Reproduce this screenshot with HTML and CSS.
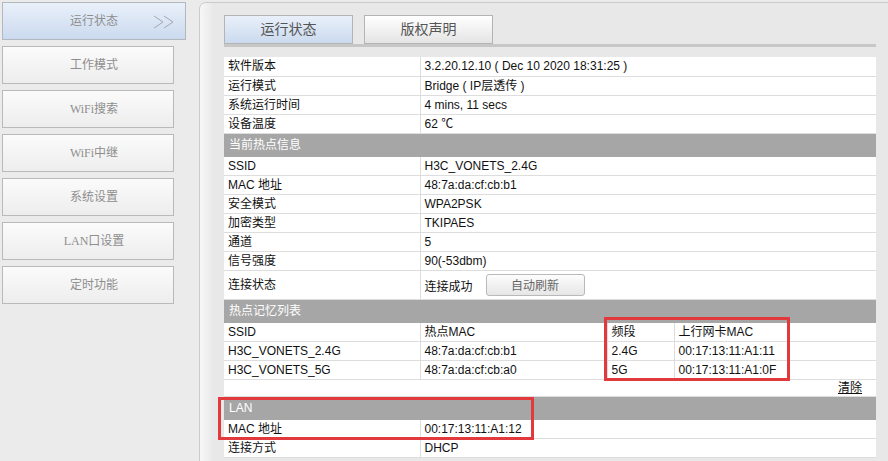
FILE: index.html
```html
<!DOCTYPE html>
<html lang="zh-CN">
<head>
  <meta charset="UTF-8">
  <meta name="viewport" content="width=device-width, initial-scale=1.0">
  <title>运行状态</title>
  <link rel="stylesheet" href="styles.css">
</head>
<body>

<div class="page">
  <div class="sidebar">
    <div class="menu-item active">运行状态
      <svg class="arrows" width="22" height="14" viewBox="0 0 22 14">
        <polyline points="1,1 10,7 1,13" fill="none" stroke="#a3a8b0" stroke-width="1"/>
        <polyline points="11,1 20,7 11,13" fill="none" stroke="#a3a8b0" stroke-width="1"/>
      </svg>
    </div>
    <div class="menu-item">工作模式</div>
    <div class="menu-item">WiFi搜索</div>
    <div class="menu-item">WiFi中继</div>
    <div class="menu-item">系统设置</div>
    <div class="menu-item">LAN口设置</div>
    <div class="menu-item">定时功能</div>
  </div>

  <div class="panel">
    <div class="tabs">
      <div class="tab active">运行状态</div>
      <div class="tab">版权声明</div>
    </div>
    <div class="tab-line"></div>

    <div class="table-wrap">
      <table class="info">
        <colgroup>
          <col style="width:196px">
          <col style="width:187px">
          <col style="width:67px">
          <col style="width:202px">
        </colgroup>
        <tr><td>软件版本</td><td colspan="3">3.2.20.12.10 ( Dec 10 2020 18:31:25 )</td></tr>
        <tr><td>运行模式</td><td colspan="3">Bridge ( IP层透传 )</td></tr>
        <tr><td>系统运行时间</td><td colspan="3">4 mins, 11 secs</td></tr>
        <tr><td>设备温度</td><td colspan="3">62 ℃</td></tr>

        <tr class="head"><td colspan="4">当前热点信息</td></tr>
        <tr><td>SSID</td><td colspan="3">H3C_VONETS_2.4G</td></tr>
        <tr><td>MAC 地址</td><td colspan="3">48:7a:da:cf:cb:b1</td></tr>
        <tr><td>安全模式</td><td colspan="3">WPA2PSK</td></tr>
        <tr><td>加密类型</td><td colspan="3">TKIPAES</td></tr>
        <tr><td>通道</td><td colspan="3">5</td></tr>
        <tr><td>信号强度</td><td colspan="3">90(-53dbm)</td></tr>
        <tr class="tall">
          <td>连接状态</td>
          <td colspan="3">连接成功<button class="refresh">自动刷新</button></td>
        </tr>

        <tr class="head"><td colspan="4">热点记忆列表</td></tr>
        <tr><td>SSID</td><td>热点MAC</td><td>频段</td><td>上行网卡MAC</td></tr>
        <tr><td>H3C_VONETS_2.4G</td><td>48:7a:da:cf:cb:b1</td><td>2.4G</td><td>00:17:13:11:A1:11</td></tr>
        <tr><td>H3C_VONETS_5G</td><td>48:7a:da:cf:cb:a0</td><td>5G</td><td>00:17:13:11:A1:0F</td></tr>
        <tr class="clear-row"><td colspan="4"><a href="#" class="clear">清除</a></td></tr>

        <tr class="head"><td colspan="4">LAN</td></tr>
        <tr><td>MAC 地址</td><td colspan="3">00:17:13:11:A1:12</td></tr>
        <tr><td>连接方式</td><td colspan="3">DHCP</td></tr>
      </table>

      <!-- marcas rojas de la captura -->
      <div class="mark mark-band"></div>
      <div class="mark mark-lan"></div>
    </div>
  </div>
</div>

</body>
</html>
```

FILE: styles.css
```css
* {
  box-sizing: border-box;
}
body {
  margin: 0;
  background-color: #ebebeb;
  font-family: "Liberation Sans", "Noto Sans CJK SC", sans-serif;
  font-size: 12px;
  color: #111;
  overflow: hidden;
  height: 461px;
}
.page {
  display: flex;
  align-items: flex-start;
}

/* menu lateral */
.sidebar {
  width: 199px;
  flex-shrink: 0;
  padding: 2px 0 0 2px;
  display: flex;
  flex-direction: column;
  gap: 6px;
}
.menu-item {
  position: relative;
  width: 172px;
  height: 38px;
  padding-left: 12px;
  line-height: 36px;
  text-align: center;
  font-family: "Liberation Serif", "Noto Sans CJK SC", serif;
  font-size: 12px;
  color: #8e8e8e;
  border: 1px solid #b9b9b9;
  background: linear-gradient(#fbfbfb, #ededed);
}
.menu-item.active {
  width: 184px;
  padding-left: 0;
  border-color: #b3b8bf;
  background: linear-gradient(#e9f0fa, #cbdaef);
}
.arrows {
  position: absolute;
  right: 10px;
  top: 12px;
}

/* panel principal */
.panel {
  width: 720px;
  flex-shrink: 0;
  margin-top: 2px;
  min-height: 470px;
  padding: 12px 0 0 24px;
  border: 1px solid #cbcbcb;
  border-top-left-radius: 7px;
  background: linear-gradient(to right, #f7f7f7 0, #e8e8e8 14px);
}
.tabs {
  display: flex;
  gap: 11px;
}
.tab {
  width: 129px;
  height: 29px;
  line-height: 27px;
  text-align: center;
  font-size: 14px;
  color: #555;
  border: 1px solid #b4b4b4;
  background: linear-gradient(#ffffff, #e4e4e4);
}
.tab.active {
  background: linear-gradient(#e9f0fa, #cbdaef);
}
.tab-line {
  width: 652px;
  height: 3px;
  background-color: #c7c7c7;
  margin-bottom: 10px;
}

.table-wrap {
  position: relative;
  width: 652px;
}
.info {
  width: 652px;
  table-layout: fixed;
  border-collapse: collapse;
  background-color: #fff;
}
.info td {
  height: 19px;
  padding: 0 4px;
  line-height: 18px;
  border-bottom: 1px solid #dddddd;
  border-left: 1px solid #dddddd;
  white-space: nowrap;
  vertical-align: middle;
}
.info td:first-child {
  border-left: none;
}
.info tr.head td {
  height: 23px;
  padding-left: 5px;
  background-color: #a6a6a6;
  color: #fff;
  border-bottom: 1px solid #a6a6a6;
}
.info tr.tall td {
  height: 29px;
}
.info tr.clear-row td {
  height: 17px;
  line-height: 16px;
  text-align: right;
  padding-right: 14px;
}
.clear {
  color: #111;
  text-decoration: underline;
}
.refresh {
  margin-left: 13px;
  width: 99px;
  height: 22px;
  font-family: "Liberation Sans", "Noto Sans CJK SC", sans-serif;
  font-size: 12px;
  color: #666;
  border: 1px solid #b9b9b9;
  border-radius: 3px;
  background: linear-gradient(#fdfdfd, #e6e6e6);
}

.mark {
  position: absolute;
  border: 3px solid #e2393d;
}
.mark-band {
  left: 380px;
  top: 260px;
  width: 186px;
  height: 64px;
}
.mark-lan {
  left: -6px;
  top: 340px;
  width: 316px;
  height: 43px;
}
```
